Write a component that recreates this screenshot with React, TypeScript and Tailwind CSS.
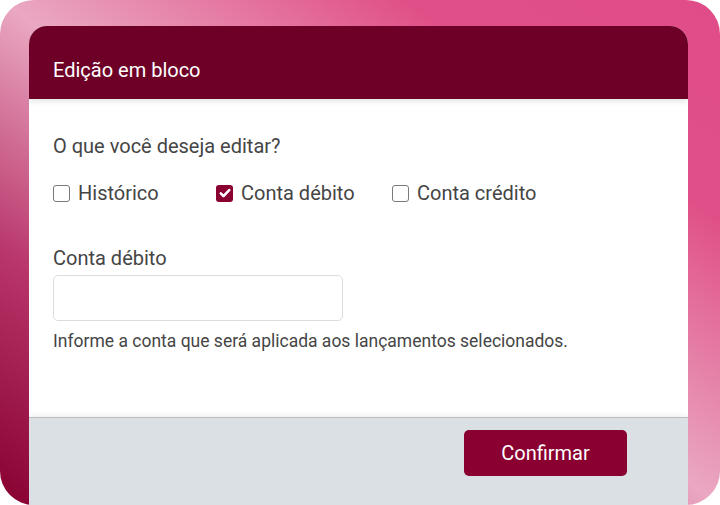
import React, { useState } from 'react';

const options = [
  { id: 'historico', label: 'Histórico', width: 'w-[163px]' },
  { id: 'debito', label: 'Conta débito', width: 'w-[176px]' },
  { id: 'credito', label: 'Conta crédito', width: 'w-auto' },
];

function Check({ checked }: { checked: boolean }) {
  if (checked) {
    return (
      <span className="flex h-[17px] w-[17px] items-center justify-center rounded-[3px] bg-[#8a0030]">
        <svg viewBox="0 0 16 16" className="h-[14px] w-[14px]" fill="none">
          <path d="M3.2 8.4l3.1 3.1L12.8 4.6" stroke="#fff" strokeWidth="3" strokeLinecap="round" strokeLinejoin="round" />
        </svg>
      </span>
    );
  }
  return <span className="block h-[17px] w-[17px] rounded-[3px] border-[1.5px] border-[#7a7a7a] bg-white" />;
}

export default function App() {
  const [selected, setSelected] = useState<string[]>(['debito']);

  const toggle = (id: string) =>
    setSelected((s) => (s.includes(id) ? s.filter((x) => x !== id) : [...s, id]));

  return (
    <div className="h-[505px] w-[720px] overflow-hidden bg-white font-['Roboto',sans-serif]">
      <div className="flex h-full w-full flex-col overflow-hidden rounded-[34px] bg-[linear-gradient(to_bottom_left,#e04c88_0%,#e05088_22%,#eaa8c2_50%,#b8356a_75%,#870030_100%)] pl-[29px] pr-[32px] pt-[26px]">
        <div className="flex flex-1 flex-col overflow-hidden rounded-t-[18px] bg-white">
          {/* Header */}
          <div className="relative z-10 h-[73px] shrink-0 bg-[#6e0028] px-6 pt-[32px] shadow-[0_2px_6px_rgba(0,0,0,0.12)]">
            <h1 className="text-[20px] font-normal leading-[24px] text-white">Edição em bloco</h1>
          </div>

          {/* Body */}
          <div className="h-[318px] shrink-0 px-6 pt-[35px] text-[#454545]">
            <p className="text-[20px] leading-[24px]">O que você deseja editar?</p>

            <div className="mt-[23px] flex items-center">
              {options.map((o) => (
                <label
                  key={o.id}
                  onClick={() => toggle(o.id)}
                  className={`flex cursor-pointer items-center gap-[8px] ${o.width}`}
                >
                  <Check checked={selected.includes(o.id)} />
                  <span className="text-[20px] leading-[24px]">{o.label}</span>
                </label>
              ))}
            </div>

            <div className="mt-[41px]">
              <label className="block text-[20px] leading-[24px]">Conta débito</label>
              <input
                type="text"
                className="mt-[5px] h-[46px] w-[290px] rounded-[5px] border border-[#dcdcdc] bg-white px-3 text-[17px] outline-none"
              />
              <p className="mt-[10px] text-[17.5px] leading-[21px]">
                Informe a conta que será aplicada aos lançamentos selecionados.
              </p>
            </div>
          </div>

          {/* Footer */}
          <div className="flex flex-1 justify-end border-t border-[#b9bdc0] bg-[#dae0e3] pr-[61px] pt-[12px] shadow-[0_-2px_5px_rgba(0,0,0,0.06)]">
            <button className="h-[46px] w-[163px] rounded-[5px] bg-[#8a0030] text-[20px] text-white">
              Confirmar
            </button>
          </div>
        </div>
      </div>
    </div>
  );
}
